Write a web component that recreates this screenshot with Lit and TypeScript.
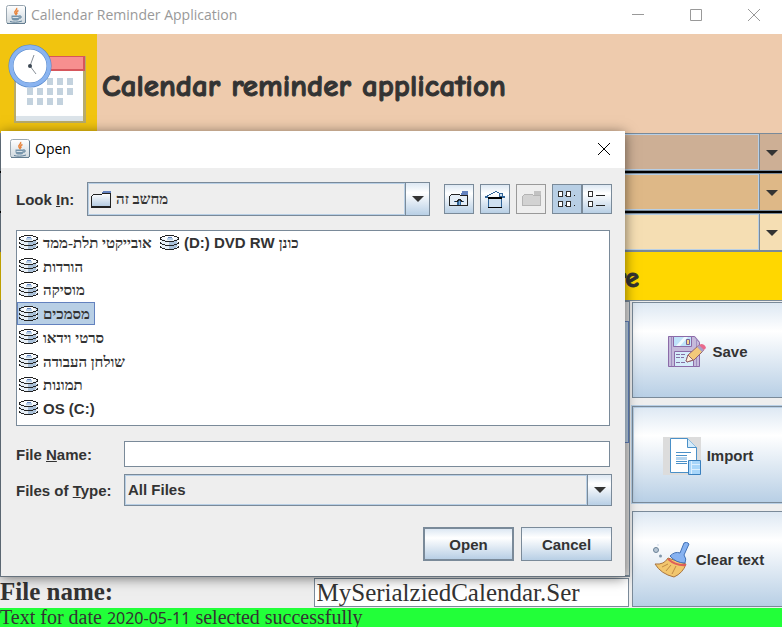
import { LitElement, html, css, svg } from "lit";
import { customElement } from "lit/decorators.js";

const javaIcon = html`<svg class="java" viewBox="0 0 20 20" aria-hidden="true">
  <defs><linearGradient id="jg" x1="0" y1="0" x2="0" y2="1"><stop offset="0" stop-color="#fff"/><stop offset="1" stop-color="#cfd8de"/></linearGradient></defs>
  <rect x=".5" y=".5" width="19" height="18" rx="2" fill="url(#jg)" stroke="#9aa7b1"/>
  <path d="M1 18.5h18M19.500 2v16" stroke="#647d90" fill="none"/>
  <path d="M10.500 3c1.500 2-3 3-1.500 5 .6 1 1.400 1.200 1 2.500M12.500 5.500c-2 1-2.500 2-1.200 3.500" stroke="#e8843c" stroke-width="1.500" fill="none"/>
  <path d="M5.500 10.500h8v2c0 2-1 3-2.500 3H8c-1.500 0-2.500-1-2.500-3z" fill="#7795ab"/>
  <path d="M13 11h2v2h-2M4 16.500c3 1 8 1 12-.5" stroke="#5f819b" fill="none"/>
  <path d="M6.500 12.500h6" stroke="#d9e3ea"/>
</svg>`;

const disk = html`<svg class="disk" viewBox="0 0 19 16" aria-hidden="true" shape-rendering="crispEdges">
  <path d="M5 1h9l3 2 1 1v8l-4 2H5l-4-2V4z" fill="#e6eef6"/>
  <path d="M9 6h8v6l-3 2H9z" fill="#a9c0d8"/>
  <path d="M5 1h9l3 2-3 2H5L2 3z" fill="#fafcfe"/>
  <path d="M7 3h6v2H7z" fill="#b8cfe5"/>
  <path d="M8 2h4v1H8z" fill="#6382bf"/>
  <path d="M5 .5h9M2 1.500h3M14 1.500h3M0 2.500h2M17 2.500h2M0 4.500h2M17 4.500h2M2 5.500h3M14 5.500h3M5 6.500h9M0 8.500h2M17 8.500h2M2 9.500h3M14 9.500h3M5 10.500h9M0 12.500h2M17 12.500h2M2 13.500h3M14 13.500h3M5 14.500h9" stroke="#222"/>
  <path d="M.5 3v1M18.500 3v1M.5 7v1M18.500 7v1M.5 11v1M18.500 11v1" stroke="#222"/>
</svg>`;

const folder = html`<svg class="folder" viewBox="0 0 20 17" aria-hidden="true" shape-rendering="crispEdges">
  <defs><linearGradient id="fg" x1="0" y1="0" x2="0" y2="1"><stop offset="0" stop-color="#fff"/><stop offset="1" stop-color="#b0c8e0"/></linearGradient></defs>
  <path d="M12 0h8v3h-9z" fill="#6382bf"/>
  <path d="M.5 16V5.500l2-2h8l1-1h8V16z" fill="url(#fg)" stroke="#222"/>
  <path d="M0 16h20" stroke="#222" stroke-width="2"/>
</svg>`;

const upFolder = svg`<path d="M13 1h6v4h-7z" fill="#6382bf"/><path d="M.5 15.500V6.500l2-2h8l1 1h7v10z" fill="#e4edf6" stroke="#222"/><path d="M8 10h4v5H8zM5 11h10v1H5z" fill="#336699"/><path d="M6 11.500h2v-1h1v-1h2v1h1v1h2" fill="none" stroke="#222"/><path d="M10 11h1v4h-1z" fill="#7fb0dd"/>`;
const home = svg`<path d="M4 6h12v5H4z" fill="#f4f8fc"/><path d="M10 1h2v1h-2zM8 2h2v1H8zM12 2h2v1h-2zM6 3h2v1H6zM4 4h2v1H4zM14 3h4v4h-4zM2 5h2v1H2zM0 6h3v2H0zM17 6h3v2h-3z" fill="#336699"/><path d="M15 4h2v2h-2z" fill="#cfe0f0"/><path d="M4 9h12v8H4z" fill="#cfe0f0"/><path d="M3 7h14v2H3zM3 17h14v1H3z" fill="#000"/><path d="M3 9h1v8H3zM16 9h1v8h-1z" fill="#336699"/>`;
const newFolder = svg`<path d="M13 1h7v4h-7z" fill="#c2c2c2"/><path d="M1.500 15.500V6.500l2-2h8l1 1h7v10z" fill="#d2d2d2" stroke="#b4b4b4"/>`;
const gridIcon = svg`<path d="M1.500 1.500h4v5h-4zM9.500 1.500h4v5h-4zM1.500 11.500h4v5h-4zM9.500 11.500h4v5h-4z" fill="#fff" stroke="#333"/><path d="M8 5h1v1H8zM17 5h1v1h-1zM8 15h1v1H8zM17 15h1v1h-1z" fill="#222"/>`;
const rowsIcon = svg`<path d="M1.500 1.500h4v5h-4zM1.500 11.500h4v5h-4z" fill="#fff" stroke="#333"/><path d="M9 5.500h9M9 15.500h9" stroke="#222"/>`;

const arrow = html`<span class="arrow"><svg viewBox="0 0 12 6" width="12" height="6" aria-hidden="true"><path d="M0 0h12L6 6z" fill="#333"/></svg></span>`;

const calendar = html`<svg class="logo" viewBox="0 0 97 97" role="img" aria-label="Calendar">
  <path d="M14 21h72v67H14z" fill="#b7ab6b"/>
  <path d="M16 35h67v50H16z" fill="#fff"/>
  <path d="M16 81h67v5H16z" fill="#dce4ea"/>
  <path d="M40 21h45v15H40z" fill="#d6565c"/><path d="M42 22h41v12H42z" fill="#f78f8f"/>
  <g fill="#c3d2de">${[47, 57, 67].map((x) => svg`<rect x=${x} y="43" width="6" height="7"/>`)}
  ${[27, 37, 47, 57, 67].map((x) => svg`<rect x=${x} y="53" width="6" height="7"/>`)}
  ${[27, 37, 47, 57].map((x) => svg`<rect x=${x} y="63" width="6" height="7"/>`)}</g>
  <circle cx="30" cy="31" r="19" fill="#fff" stroke="#4f83c8" stroke-width="5"/>
  <circle cx="30" cy="31" r="19" fill="none" stroke="#8ab4f0" stroke-width="4"/>
  <path d="M34 20l-4 11 6 8" fill="none" stroke="#888f97"/><circle cx="30" cy="31" r="2" fill="#3c4753"/>
</svg>`;

const floppy = html`<svg width="38" height="31" viewBox="0 0 38 31" aria-hidden="true">
  <path d="M0 0h27l5 6v25H0z" fill="#c5badb"/>
  <path d="M.500.500h26l5 6v24H.500z" fill="none" stroke="#8b6aa8"/>
  <path d="M3.500 1v29M28.500 3v27" stroke="#a08fc0"/>
  <path d="M5.500.500h18v10h-18z" fill="#bfe3fa" stroke="#8b6aa8"/><path d="M8 10l8-9h4l-8 9z" fill="#effaff"/>
  <path d="M18.500 3.500h3v5h-3z" fill="#f5d58a" stroke="#7b5f96"/>
  <path d="M6.500 15.500h19v15h-19z" fill="#d5ecfb" stroke="#8b6aa8"/>
  <path d="M8 18.500h10M8 21.500h8M8 26.500h10" stroke="#856fa3" stroke-dasharray="4 1"/>
  <path d="M18 25l2-6L31 9l5 5-10 10-7 2z" fill="#f3c97a" stroke="#93626f"/>
  <path d="M18 25l2-6 5 5-6 2z" fill="#fff0d8" stroke="#93626f"/>
  <path d="M30 10l3-2q4 0 5 4l-3 3z" fill="#e96a8d"/><path d="M29 11l5 5 2-2-5-5z" fill="#a9a0c8"/>
</svg>`;

const documentIcon = html`<svg width="38" height="38" viewBox="0 0 38 38" aria-hidden="true">
  <path d="M0 0h38v38H0z" fill="#dcdcdc"/>
  <path d="M7.500 1.500h17l9 9v25h-26z" fill="#fff" stroke="#4a90c8"/>
  <path d="M24.500 1.500v9h9" fill="#d5ebfa" stroke="#4a90c8"/>
  <path d="M13 15.500h15M13 18.500h11M13 24.500h11M13 26.500h11" stroke="#4a90c8"/><path d="M13 20h11v3H13z" fill="#b4d4ee"/>
  <path d="M25.500 23.500h12v14h-12z" fill="#a8d6fa" stroke="#3a80be"/><path d="M28.500 24v13M29 27.500h8M29 32.500h8" stroke="#dcefff"/>
</svg>`;

const broom = html`<svg width="38" height="36" viewBox="0 0 38 36" aria-hidden="true">
  <circle cx="4" cy="8" r="2.500" fill="#b7c6d4" stroke="#6a8298"/><circle cx="8.500" cy="14" r="1.500" fill="#8197aa"/><circle cx="6" cy="3" r="1" fill="#dce4ee"/>
  <path d="M16 16Q12 23 3 22q6 10 19 13 9-4 12-13z" fill="#f2c66d" stroke="#a8743f"/>
  <path d="M10 25l6-3M14 29l5-6M20 32l4-8" stroke="#c08b45"/>
  <path d="M16 17q8 7 18 6" fill="none" stroke="#df5f59" stroke-width="2"/>
  <path d="M18 14q5-5 10-3l4-10q3-2 5 1l-5 11q3 4 1 8-9 0-15-7z" fill="#86b2f1" stroke="#4272b7"/>
</svg>`;

interface Place { latin?: string; hebrew?: string }

const places: Place[] = [
  { hebrew: "אובייקטי תלת-ממד" },
  { hebrew: "הורדות" },
  { hebrew: "מוסיקה" },
  { hebrew: "מסמכים" },
  { hebrew: "סרטי וידאו" },
  { hebrew: "שולחן העבודה" },
  { hebrew: "תמונות" },
  { latin: "OS (C:)" },
  { latin: "(D:) DVD RW ", hebrew: "כונן" },
];

const cross = html`<svg width="12" height="12" viewBox="0 0 12 12" aria-hidden="true"><path d="M0 0l12 12M12 0L0 12" stroke="currentColor"/></svg>`;

@customElement("app-root")
export class AppRoot extends LitElement {
  static styles = css`
    :host { display: block; color: #333; font: bold 15px/18px "Liberation Sans", Arial, sans-serif; }
    * { box-sizing: border-box; }
    button, input, select { font: inherit; color: inherit; margin: 0; border-radius: 0; outline: none; }
    button { padding: 0; }
    .window { position: relative; display: flex; flex-direction: column; min-height: 100vh; overflow: hidden; background: #eee; }
    .titlebar { display: flex; align-items: center; gap: 5px; height: 34px; padding: 0 6px 4px; background: #fff; color: #999; font: 14px/20px "Open Sans", sans-serif; }
    .titlebar .name { flex: 1; }
    .java { width: 20px; height: 20px; flex: none; }
    .chrome { display: flex; align-items: center; justify-content: center; width: 34px; height: 28px; border: 0; background: none; }
    .controls { display: flex; gap: 24px; padding-right: 5px; }
    .banner { display: flex; align-items: center; gap: 5px; height: 99px; background: #eecbad; }
    .logo { width: 97px; height: 99px; background: #f1c40f; flex: none; }
    h1, h2 { margin: 0; font: bold 31px/36px "Comic Sans MS", "Comic Neue", "Noto Sans", sans-serif; -webkit-text-stroke: 1px #333; }
    h1 { padding-top: 4px; }
    .bars { display: grid; gap: 2px; background: #000; }
    .combo { display: flex; align-items: stretch; border: 1px solid #7a8a99; height: 34px; background: #eee; }
    .combo .value { flex: 1; display: flex; align-items: center; min-width: 0; border: 1px solid #b8cfe5; padding-left: 2px; gap: 5px; }
    .combo select { flex: 1; min-width: 0; height: 100%; padding: 0; border: 0; background: none; appearance: none; }
    .arrow { display: flex; align-items: center; justify-content: center; width: 24px; border-left: 1px solid #7a8a99; background: linear-gradient(#dde8f3, #fff 30%, #b8cfe5); }
    .bars .combo { height: 38px; margin-right: -2px; }
    .bars .arrow { padding-top: 2px; background: none; }
    .bars .year { background: #cdaf95; }
    .bars .month { background: #deb887; }
    .bars .day { background: #f5deb3; }
    h2 { height: 50px; padding: 8px 143px 0 0; border-top: 1px solid #7a8a99; border-bottom: 1px solid #7a8a99; background: #ffd700; text-align: right; font-size: 28px; }
    .content { flex: 1; display: flex; gap: 2px; }
    .editor { flex: 1; display: flex; flex-direction: column; min-width: 0; }
    .pane { flex: 1; display: flex; justify-content: flex-end; border: 1px solid #7a8a99; border-width: 1px 1px 2px; background: #fff; }
    .track { display: flex; flex-direction: column; width: 16px; padding: 19px 0; background: #ddd; }
    .thumb { height: 122px; border: 1px solid #6382bf; background: linear-gradient(90deg, #dde8f3, #b8cfe5); }
    .filerow { display: flex; height: 31px; padding: 1px 1px 1px 0; }
    .filerow label { width: 50%; margin-right: -1px; flex: none; font: bold 25px/28px "Liberation Serif", serif; }
    .filerow input { flex: 1; min-width: 0; border: 1px solid #7a8a99; background: #fff; padding: 0 2px; font: 25px/28px "Liberation Serif", serif; }
    .actions { width: 150px; flex: none; display: flex; flex-direction: column; gap: 8px; padding: 1px 0 1px; }
    .action { flex: 1; display: flex; align-items: center; justify-content: center; gap: 6px; margin-right: -2px; padding-top: 3px; border: 1px solid #7a8a99; background: linear-gradient(#dde8f3, #fff 30%, #b8cfe5); white-space: nowrap; }
    .action.focused { box-shadow: 0 0 0 1px #b8cfe5, inset 0 0 0 1px #b8cfe5; }
    .status { height: 19px; background: #22ff39; font: 20px/18px "Liberation Serif", serif; white-space: nowrap; }
    .date { font: 16px/18px "Noto Sans", sans-serif; }

    .dialog { position: absolute; left: 1px; right: 157px; top: 131px; background: #eee; box-shadow: 0 1px 0 #66727d, 0 2px 12px rgba(0, 0, 0, .55); }
    .dialog .titlebar { height: 37px; padding: 0 4px 2px 9px; color: #000; }
    .body { display: flex; flex-direction: column; padding: 14px 13px 15px 15px; }
    .row { display: flex; align-items: center; }
    .row label { width: 108px; padding-top: 2px; flex: none; }
    .row .short { width: 71px; }
    .row .combo { flex: 1; }
    .tools { display: flex; gap: 6px; margin-left: 14px; }
    .tool { display: flex; align-items: center; justify-content: center; width: 30px; height: 30px; border: 1px solid #7a8a99; background: linear-gradient(#dde8f3, #fff 30%, #b8cfe5); }
    .tool:disabled { border-color: #999; background: #eee; }
    .pair { display: flex; }
    .tool.on { background: #b8cfe5; }
    .folder { width: 20px; height: 17px; flex: none; }
    .combo .he, .he { font-family: "Liberation Serif", serif; font-size: 15px; }
    .places { display: grid; grid-template: repeat(8, 23px) / 141px; grid-auto-flow: column; justify-content: start; align-content: space-between; height: 196px; margin: 14px 2px 15px 0; padding: 0 0 5px; border: 1px solid #7a8a99; background: #fff; list-style: none; line-height: 18px; }
    .places li { display: flex; align-items: center; justify-self: start; gap: 5px; height: 23px; padding: 0 4px 0 1px; border: 1px solid transparent; white-space: nowrap; }
    .places li span { padding-top: 1px; white-space: pre; }
    .places .selected { background: #b8cfe5; border-color: #6382bf; }
    .disk { width: 19px; height: 16px; flex: none; }
    .name-input { flex: 1; min-width: 0; height: 26px; margin-right: 2px; border: 1px solid #7a8a99; background: #fff; }
    .type { margin-top: 7px; }
    .type .combo { height: 32px; }
    .buttons { display: flex; justify-content: flex-end; gap: 7px; margin-top: 21px; }
    .btn { width: 91px; height: 34px; padding-top: 2px; border: 1px solid #7a8a99; background: linear-gradient(#dde8f3, #fff 30%, #b8cfe5); }
    .btn.primary { border-width: 2px; }
  `;

  private combo(cls: string, label: string) {
    return html`<div class="combo ${cls}"><span class="value"><select aria-label=${label}></select></span>${arrow}</div>`;
  }

  private tool(label: string, icon: unknown, cls = "", disabled = false) {
    return html`<button class="tool ${cls}" aria-label=${label} ?disabled=${disabled}><svg width="20" height="18" viewBox="0 0 20 18" shape-rendering="crispEdges" aria-hidden="true">${icon}</svg></button>`;
  }

  render() {
    return html`<div class="window">
      <header class="titlebar">${javaIcon}<span class="name">Callendar Reminder Application</span>
        <span class="controls">
          <button class="chrome" aria-label="Minimize"><svg width="12" height="12" aria-hidden="true"><path d="M0 5.500h12" stroke="#999"/></svg></button>
          <button class="chrome" aria-label="Maximize"><svg width="12" height="12" aria-hidden="true"><path d="M.5.5h11v11H.5z" fill="none" stroke="#999"/></svg></button>
          <button class="chrome" aria-label="Close window">${cross}</button>
        </span>
      </header>
      <div class="banner">${calendar}<h1>Calendar reminder application</h1></div>
      <div class="bars">${this.combo("year", "Year")}${this.combo("month", "Month")}${this.combo("day", "Day")}</div>
      <h2>re</h2>
      <main class="content">
        <div class="editor">
          <div class="pane"><div class="track"><div class="thumb"></div></div></div>
          <div class="filerow"><label for="file">File name:</label><input id="file" .value=${"MySerialziedCalendar.Ser"}></div>
        </div>
        <div class="actions">
          <button class="action">${floppy}Save</button>
          <button class="action focused">${documentIcon}Import</button>
          <button class="action">${broom}Clear text</button>
        </div>
      </main>
      <footer class="status">Text for date <span class="date">2020-05-11</span> selected successfully</footer>

      <section class="dialog" role="dialog" aria-labelledby="dlg">
        <header class="titlebar">${javaIcon}<span class="name" id="dlg">Open</span><button class="chrome" aria-label="Close">${cross}</button></header>
        <div class="body">
          <div class="row">
            <label class="short" for="look">Look <u>I</u>n:</label>
            <div class="combo"><span class="value">${folder}<select id="look" class="he"><option>מחשב זה</option></select></span>${arrow}</div>
            <div class="tools">
              ${this.tool("Up One Level", upFolder)}${this.tool("Home", home)}${this.tool("Create New Folder", newFolder, "", true)}
              <div class="pair">${this.tool("List", gridIcon, "on")}${this.tool("Details", rowsIcon)}</div>
            </div>
          </div>
          <ul class="places" role="listbox" aria-label="Files">
            ${places.map((p, i) => html`<li role="option" aria-selected=${i === 3} class=${i === 3 ? "selected" : ""}>${disk}<span>${p.latin}<bdi class="he">${p.hebrew}</bdi></span></li>`)}
          </ul>
          <div class="row"><label for="fname">File <u>N</u>ame:</label><input id="fname" class="name-input"></div>
          <div class="row type"><label for="ftype">Files of <u>T</u>ype:</label>
            <div class="combo"><span class="value"><select id="ftype"><option>All Files</option></select></span>${arrow}</div></div>
          <div class="buttons"><button class="btn primary">Open</button><button class="btn">Cancel</button></div>
        </div>
      </section>
    </div>`;
  }
}
